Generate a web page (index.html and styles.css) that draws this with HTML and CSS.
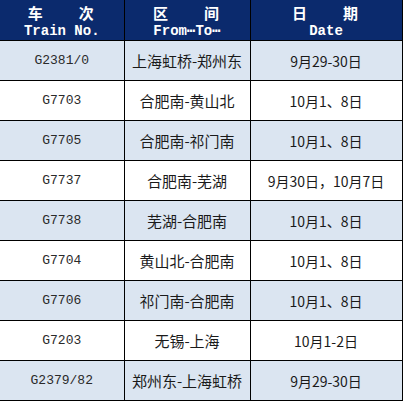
FILE: index.html
```html
<!DOCTYPE html>
<html>
<head>
<meta charset="utf-8">
<link rel="stylesheet" href="styles.css">
</head>
<body>
<table class="tbl">
  <colgroup><col class="c1"><col class="c2"><col class="c3"></colgroup>
  <thead>
    <tr class="head">
      <th><div class="zh">车&emsp;&emsp;次</div><div class="en">Train No.</div></th>
      <th><div class="zh">区&emsp;&emsp;间</div><div class="en">From⋯To⋯</div></th>
      <th><div class="zh">日&emsp;&emsp;期</div><div class="en">Date</div></th>
    </tr>
  </thead>
  <tbody>
    <tr class="alt"><td class="no">G2381/0</td><td class="rt">上海虹桥-郑州东</td><td class="dt">9月29-30日</td></tr>
    <tr><td class="no">G7703</td><td class="rt">合肥南-黄山北</td><td class="dt">10月1、8日</td></tr>
    <tr class="alt"><td class="no">G7705</td><td class="rt">合肥南-祁门南</td><td class="dt">10月1、8日</td></tr>
    <tr><td class="no">G7737</td><td class="rt">合肥南-芜湖</td><td class="dt">9月30日，10月7日</td></tr>
    <tr class="alt"><td class="no">G7738</td><td class="rt">芜湖-合肥南</td><td class="dt">10月1、8日</td></tr>
    <tr><td class="no">G7704</td><td class="rt">黄山北-合肥南</td><td class="dt">10月1、8日</td></tr>
    <tr class="alt"><td class="no">G7706</td><td class="rt">祁门南-合肥南</td><td class="dt">10月1、8日</td></tr>
    <tr><td class="no">G7203</td><td class="rt">无锡-上海</td><td class="dt">10月1-2日</td></tr>
    <tr class="alt"><td class="no">G2379/82</td><td class="rt">郑州东-上海虹桥</td><td class="dt">9月29-30日</td></tr>
  </tbody>
</table>
</body>
</html>
```
FILE: styles.css
```css
html, body {
  margin: 0;
  padding: 0;
  background: #ffffff;
}
.tbl {
  border-collapse: collapse;
  table-layout: fixed;
  width: 402px;
  font-family: "Noto Sans CJK SC", "DejaVu Sans", sans-serif;
  font-size: 14px;
  color: #1a1a1a;
}
.c1 { width: 124px; }
.c2 { width: 126px; }
.c3 { width: 152px; }
.head th {
  background: #0b2a6d;
  color: #ffffff;
  height: 40px;
  padding: 0;
  border-left: 1px solid #000;
  border-right: 1px solid #000;
  text-align: center;
  vertical-align: middle;
}
.head th:first-child { border-left: none; }
.zh {
  font-family: "Noto Sans CJK SC", sans-serif;
  font-weight: 700;
  font-size: 15px;
  line-height: 21px;
  letter-spacing: 2px;
}
.en {
  font-family: "Liberation Mono", "DejaVu Sans Mono", monospace;
  font-weight: 700;
  font-size: 14px;
  line-height: 16px;
}
td {
  height: 39px;
  padding: 0;
  text-align: center;
  vertical-align: middle;
  border: 1px solid #000;
  line-height: 16px;
  white-space: nowrap;
}
td:first-child { border-left: none; }
.no {
  font-family: "Liberation Mono", "DejaVu Sans Mono", monospace;
  font-size: 13px;
  color: #2a2a2a;
}
.rt { font-size: 15px; }
.dt { font-size: 14px; }
tr.alt td { background: #dbe5f1; }
```
